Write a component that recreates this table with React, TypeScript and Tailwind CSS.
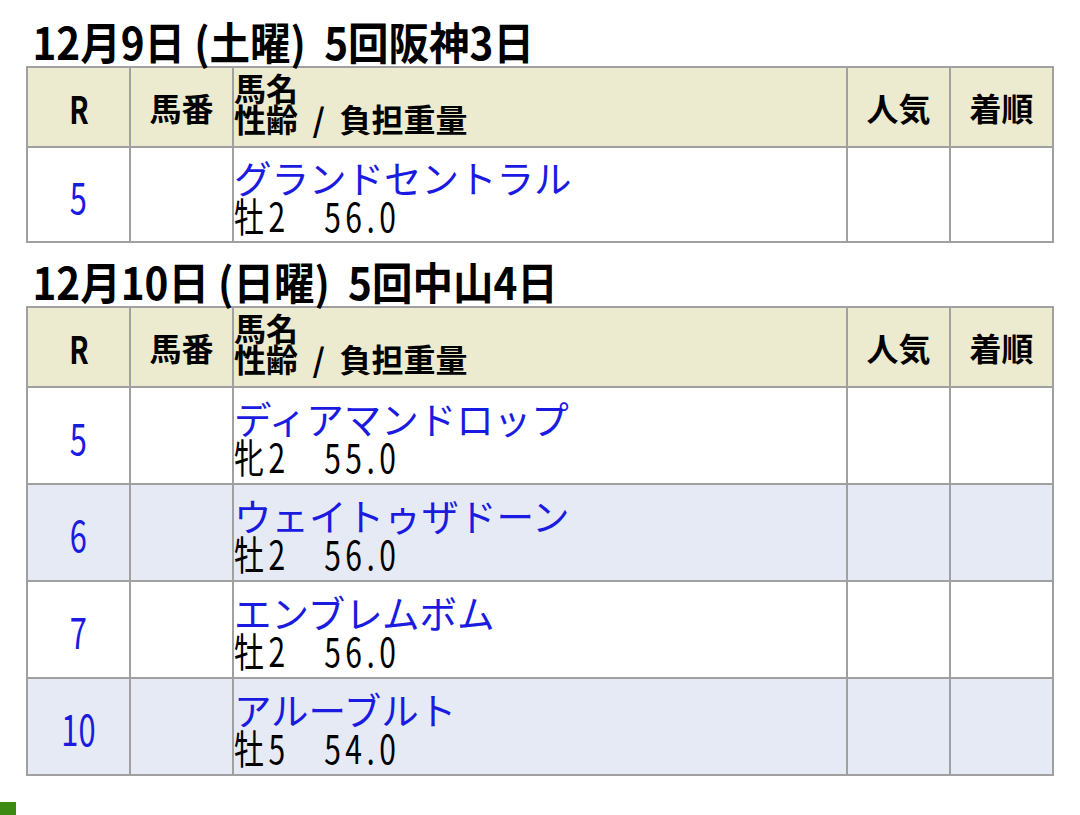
import React from "react";

type Row = { r: string; name: string; info: string; alt?: boolean };

const cjk = { fontFamily: '"Noto Sans CJK JP", "Noto Sans", sans-serif' };
const palt = { fontFeatureSettings: '"palt"' };

const cell = "border-2 border-[#a0a0a0]";

function RaceTable({ rows, tall }: { rows: Row[]; tall?: boolean }) {
  return (
    <table className="w-full border-collapse border-2 border-[#a0a0a0] table-fixed">
      <colgroup>
        <col className="w-[103px]" />
        <col className="w-[103px]" />
        <col />
        <col className="w-[103px]" />
        <col className="w-[103px]" />
      </colgroup>
      <thead>
        <tr className="h-[80px] bg-[#ecebcf] text-[32px] font-bold text-black">
          <th className={`${cell} text-center`}>
            <span className="inline-block text-[38px] scale-x-[0.75]">R</span>
          </th>
          <th className={`${cell} text-center`}>馬番</th>
          <th className={`${cell} text-left align-top pt-[4px] leading-[31px]`}>
            <div>馬名</div>
            <div className="whitespace-pre">性齢  /  負担重量</div>
          </th>
          <th className={`${cell} text-center`}>人気</th>
          <th className={`${cell} text-center`}>着順</th>
        </tr>
      </thead>
      <tbody>
        {rows.map((row, i) => (
          <tr
            key={i}
            className={`${tall ? "h-[97px]" : "h-[95px]"} ${row.alt ? "bg-[#e6eaf4]" : "bg-white"}`}
          >
            <td className={`${cell} text-center text-[#1a1ae0]`}>
              <span className="inline-block text-[44px] leading-[48px] scale-x-[0.7]">{row.r}</span>
            </td>
            <td className={cell}></td>
            <td className={`${cell} align-middle`}>
              <div className="text-[37.5px] leading-[40px] text-[#1a1ae0]">{row.name}</div>
              <div className="origin-left scale-x-[0.75] text-[40px] leading-[36px] tracking-[6px] text-black whitespace-pre">
                {row.info}
              </div>
            </td>
            <td className={cell}></td>
            <td className={cell}></td>
          </tr>
        ))}
      </tbody>
    </table>
  );
}

function Heading({ text, className }: { text: string; className: string }) {
  return (
    <h2
      className={`origin-left scale-x-[0.92] text-[44px] font-bold leading-[50px] text-black pl-[7px] whitespace-pre ${className}`}
      style={palt}
    >
      {text}
    </h2>
  );
}

export default function App() {
  return (
    <div className="w-[1080px] min-h-[815px] bg-white px-[26px] pt-[16px]" style={cjk}>
      <Heading text="12月9日 (土曜)  5回阪神3日" className="" />
      <RaceTable rows={[{ r: "5", name: "グランドセントラル", info: "牡2　56.0" }]} />
      <Heading text="12月10日 (日曜)  5回中山4日" className="mt-[13px]" />
      <RaceTable
        tall
        rows={[
          { r: "5", name: "ディアマンドロップ", info: "牝2　55.0" },
          { r: "6", name: "ウェイトゥザドーン", info: "牡2　56.0", alt: true },
          { r: "7", name: "エンブレムボム", info: "牡2　56.0" },
          { r: "10", name: "アルーブルト", info: "牡5　54.0", alt: true },
        ]}
      />
      <div className="-ml-[26px] mt-[26px] w-[16px] h-[14px] bg-[#3c8a14]"></div>
    </div>
  );
}
